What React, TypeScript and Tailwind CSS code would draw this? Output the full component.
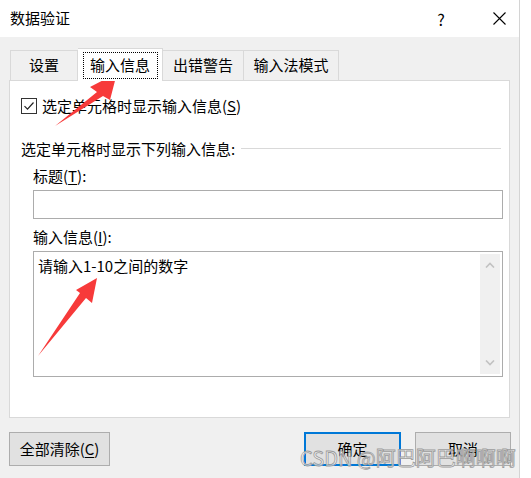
import React from "react";

const font = "font-['Microsoft_YaHei_UI','Noto_Sans_CJK_SC',sans-serif]";

function Arrow({ points }: { points: string }) {
  return (
    <svg className="pointer-events-none absolute left-0 top-0" width="531" height="478">
      <polygon points={points} fill="#f73a3a" />
    </svg>
  );
}

export default function App() {
  return (
    <div className={`relative flex h-[478px] w-[531px] overflow-hidden bg-white text-[15px] text-black ${font}`}>
      <div className="flex w-[520px] flex-col border-r border-[#d4d4d4] bg-[#f0f0f0]">
        {/* title bar */}
        <div className="flex h-[37px] items-center bg-white pl-[10px]">
          <span className="flex-1">数据验证</span>
          <span className="w-[20px] text-center text-[16px]">?</span>
          <svg className="ml-[42px] mr-[13px]" width="13" height="13" viewBox="0 0 13 13">
            <path d="M0.5 0.5L12.5 12.5M12.5 0.5L0.5 12.5" stroke="#000" strokeWidth="1.1" />
          </svg>
        </div>

        <div className="flex flex-col px-[9px] pt-[11px]">
          {/* tabs */}
          <div className="flex items-end pl-px">
            <div className="flex h-[30px] w-[68px] items-center justify-center border border-b-0 border-[#d9d9d9]">
              设置
            </div>
            <div className="relative z-10 -mb-px flex h-[33px] w-[85px] items-center justify-center border border-b-0 border-l-0 border-[#d9d9d9] bg-white">
              <span className="flex h-[27px] w-[75px] items-center justify-center border border-dotted border-black">
                输入信息
              </span>
            </div>
            <div className="flex h-[30px] w-[81px] items-center justify-center border border-b-0 border-l-0 border-[#d9d9d9]">
              出错警告
            </div>
            <div className="flex h-[30px] w-[95px] items-center justify-center border border-b-0 border-l-0 border-[#d9d9d9]">
              输入法模式
            </div>
          </div>

          {/* panel */}
          <div className="flex h-[338px] flex-col border border-[#d9d9d9] bg-white pl-[11px] pr-[8px] pt-[14px]">
            <label className="flex items-center gap-[5px]">
              <span className="flex h-[16px] w-[16px] items-center justify-center border border-[#333] bg-white">
                <svg width="12" height="12" viewBox="0 0 12 12">
                  <path d="M1.5 6.2L4.5 9.2L10.5 2.5" fill="none" stroke="#222" strokeWidth="1.2" />
                </svg>
              </span>
              <span>
                选定单元格时显示输入信息(<span className="underline underline-offset-2">S</span>)
              </span>
            </label>

            <div className="mt-[20px] flex items-center gap-[6px]">
              <span>选定单元格时显示下列输入信息:</span>
              <div className="h-px flex-1 bg-[#d9d9d9]" />
            </div>

            <div className="pl-[12px]">
              <div className="mt-[5px]">
                标题(<span className="underline underline-offset-2">T</span>):
              </div>
              <div className="mt-[2px] h-[29px] w-[470px] border border-[#acacac] bg-white" />

              <div className="mt-[7px]">
                输入信息(<span className="underline underline-offset-2">I</span>):
              </div>
              <div className="mt-[3px] flex h-[126px] w-[470px] border border-[#acacac] bg-white p-[2px]">
                <div className="flex-1 pl-[2px] pt-[1px] leading-[22px]">请输入1-10之间的数字</div>
                <div className="flex w-[20px] flex-col items-center justify-between bg-[#f0f0f0] py-[8px]">
                  <svg width="10" height="6" viewBox="0 0 10 6">
                    <path d="M1 5.5L5 1.5L9 5.5" fill="none" stroke="#c2c2c2" strokeWidth="1.6" />
                  </svg>
                  <svg width="10" height="6" viewBox="0 0 10 6">
                    <path d="M1 0.5L5 4.5L9 0.5" fill="none" stroke="#c2c2c2" strokeWidth="1.6" />
                  </svg>
                </div>
              </div>
            </div>
          </div>

          {/* buttons */}
          <div className="mt-[14px] flex">
            <button className="h-[34px] w-[101px] border border-[#adadad] bg-[#e1e1e1]">
              全部清除(<span className="underline underline-offset-2">C</span>)
            </button>
            <button className="ml-auto h-[34px] w-[97px] border-2 border-[#0078d7] bg-[#e1e1e1]">确定</button>
            <button className="ml-[14px] mr-[-1px] h-[34px] w-[96px] border border-[#adadad] bg-[#e1e1e1]">取消</button>
          </div>
        </div>
      </div>

      {/* watermark */}
      <div className="pointer-events-none absolute left-[300px] top-[446px] text-[20px] leading-[24px] text-white/70 [-webkit-text-stroke:0.8px_#9a9a9a]">
        CSDN @阿巴阿巴啊啊啊
      </div>

      <Arrow points="117,73 110,100 103,96 55,126 97,92 90,87" />
      <Arrow points="97,278 92,303 86,298 38,356 80,293 76,290" />
    </div>
  );
}
